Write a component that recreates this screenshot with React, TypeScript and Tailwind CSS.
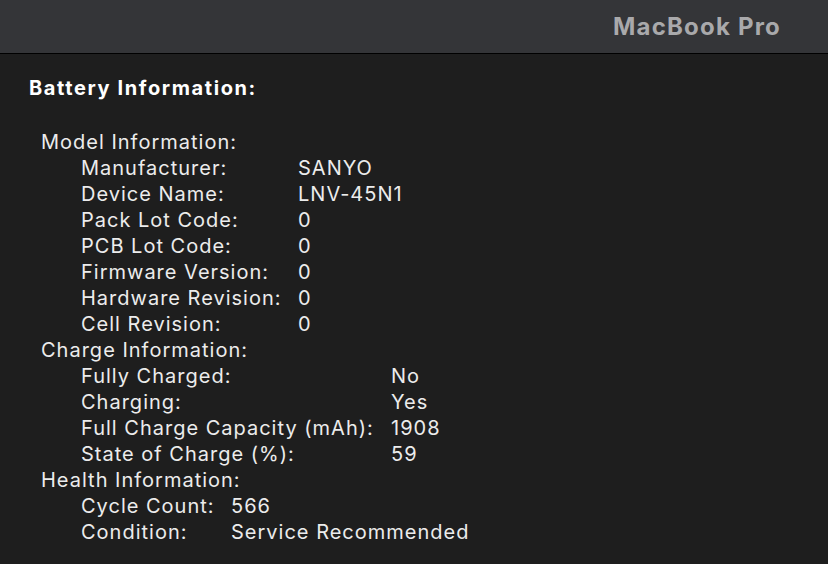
import React from "react";

type Row = [string, string];

const sections: { title: string; col: string; rows: Row[] }[] = [
    {
        title: "Model Information:",
        col: "grid-cols-[217px_1fr]",
        rows: [
            ["Manufacturer:", "SANYO"],
            ["Device Name:", "LNV-45N1"],
            ["Pack Lot Code:", "0"],
            ["PCB Lot Code:", "0"],
            ["Firmware Version:", "0"],
            ["Hardware Revision:", "0"],
            ["Cell Revision:", "0"],
        ],
    },
    {
        title: "Charge Information:",
        col: "grid-cols-[310px_1fr]",
        rows: [
            ["Fully Charged:", "No"],
            ["Charging:", "Yes"],
            ["Full Charge Capacity (mAh):", "1908"],
            ["State of Charge (%):", "59"],
        ],
    },
    {
        title: "Health Information:",
        col: "grid-cols-[150px_1fr]",
        rows: [
            ["Cycle Count:", "566"],
            ["Condition:", "Service Recommended"],
        ],
    },
];

export default function App() {
    return (
        <div
            className="w-[828px] h-[564px] bg-[#1e1e1e] text-[#ececec] overflow-hidden"
            style={{fontFamily: "Inter, 'Noto Sans', sans-serif"}}
        >
            <header className="h-[54px] bg-[#343538] border-b border-black flex items-center justify-end pr-[47px]">
                <span className="text-[24px] font-bold text-[#a9a9ab] tracking-[1.2px]">MacBook Pro</span>
            </header>
            <main className="pl-[29px] pt-[21px]">
                <h1 className="text-[20px] font-bold text-white leading-[26px] tracking-[1.6px]">
                    Battery Information:
                </h1>
                <div className="mt-[28px] pl-[12px] text-[20px] leading-[26px] tracking-[1px]">
                    {sections.map(s => (
                        <div key={s.title}>
                            <div>{s.title}</div>
                            <div className={"grid pl-[40px] " + s.col}>
                                {s.rows.map(([k, v]) => (
                                    <React.Fragment key={k}>
                                        <span className="whitespace-nowrap">{k}</span>
                                        <span className="whitespace-nowrap">{v}</span>
                                    </React.Fragment>
                                ))}
                            </div>
                        </div>
                    ))}
                </div>
            </main>
        </div>
    );
}
